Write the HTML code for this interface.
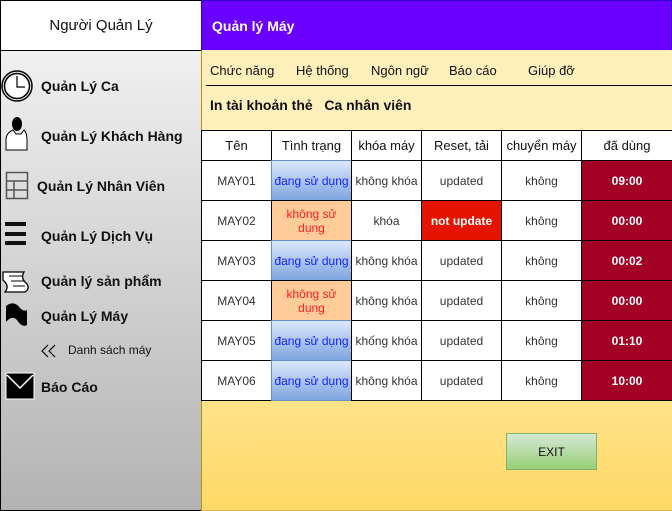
<!DOCTYPE html>
<html><head><meta charset="utf-8"><style>
*{margin:0;padding:0;box-sizing:border-box}
body{width:672px;height:511px;position:relative;overflow:hidden;font-family:"Liberation Sans",sans-serif;background:#fff}
.a{position:absolute}
.side{left:0;top:50px;width:202px;height:461px;border:1px solid #000;background:linear-gradient(#f0f0f0,#b3b3b3)}
.nav{position:absolute;font-weight:bold;font-size:14px;color:#111;white-space:nowrap}
.c{position:absolute;border:1px solid #000;display:flex;align-items:center;justify-content:center;text-align:center;font-size:12px;color:#333;line-height:14px;background:#fff}
.h{font-size:13px;color:#111}
.m{position:absolute;top:63px;font-size:13px;color:#111}
.blue{background:linear-gradient(#dae8fc,#7ea6e0);color:#1a1aff;border-color:#6c8ebf}
.or{background:#ffcc99;color:#ff2020}
.dr{background:#a20025;color:#fff;font-weight:bold}
</style></head><body>
<div class="a" style="left:0;top:0;width:202px;height:51px;border:1px solid #000;background:#fff;display:flex;align-items:center;justify-content:center;font-size:15px;color:#111">Người Quản Lý</div>
<div class="a side"></div>
<svg class="a" style="left:0;top:60px" width="40" height="350">
<circle cx="17" cy="26" r="15" fill="none" stroke="#000" stroke-width="1.5"/><circle cx="17" cy="26" r="12.5" fill="#fff" stroke="#000" stroke-width="1.5"/><path d="M17 16V27H25" fill="none" stroke="#000" stroke-width="1.2"/>
<path d="M6 90V80Q6 73 13 70L16 74 21 74 24 70Q27 73 27 80V90Z" fill="#fff" stroke="#000"/><ellipse cx="17" cy="64" rx="5" ry="7" fill="#000"/>
<rect x="6.5" y="112.5" width="21" height="26" fill="none" stroke="#555" stroke-width="1.5"/><path d="M6.5 121H27.5M6.5 130H27.5M14 121V138.5" stroke="#555" stroke-width="1.5"/>
<rect x="5" y="162" width="21" height="4" fill="#111"/><rect x="5" y="172" width="21" height="4" fill="#111"/><rect x="5" y="181" width="21" height="4" fill="#111"/>
<path d="M3 212H24Q20 218 27 224Q30 229 25 232H5Q10 226 3 220Z" fill="#fff" stroke="#000" stroke-width="1.3"/><path d="M9 216H22M11 221H24M13 226H25" stroke="#000"/>
<path d="M6 246Q14 240 20 248Q24 252 27 250V265Q22 268 17 260Q12 255 6 262Z" fill="#000"/>
<rect x="6" y="313" width="28" height="26" fill="#000" stroke="#fff"/><path d="M7 315L20 328 33 315" fill="none" stroke="#fff" stroke-width="1.5"/>
</svg>
<svg class="a" style="left:40px;top:343px" width="18" height="16"><path d="M8 2L2 8 8 14M15 2L9 8 15 14" fill="none" stroke="#000" stroke-width="1.2"/></svg>
<div class="nav" style="left:41px;top:78px">Quản Lý Ca</div>
<div class="nav" style="left:41px;top:128px">Quản Lý Khách Hàng</div>
<div class="nav" style="left:37px;top:178px">Quản Lý Nhân Viên</div>
<div class="nav" style="left:41px;top:228px">Quản Lý Dịch Vụ</div>
<div class="nav" style="left:41px;top:273px">Quản lý sản phẩm</div>
<div class="nav" style="left:41px;top:308px">Quản Lý Máy</div>
<div class="nav" style="left:68px;top:343px;font-weight:normal;font-size:12px">Danh sách máy</div>
<div class="nav" style="left:41px;top:379px">Báo Cáo</div>
<div class="a" style="left:201px;top:0;width:471px;height:51px;background:#6a00ff;border:1px solid #3700cc;color:#fff;font-weight:bold;font-size:14px;padding:17px 0 0 10px">Quản lý Máy</div>
<div class="a" style="left:201px;top:50px;width:471px;height:81px;background:#ffefbb;border-left:1px solid #b09500"></div>
<div class="a" style="left:206px;top:85px;width:466px;height:1px;background:#000"></div>
<div class="m" style="left:210px">Chức năng</div>
<div class="m" style="left:296px">Hệ thống</div>
<div class="m" style="left:371px">Ngôn ngữ</div>
<div class="m" style="left:449px">Báo cáo</div>
<div class="m" style="left:528px">Giúp đỡ</div>
<div class="a" style="left:210px;top:97px;font-size:14px;font-weight:bold;color:#111">In tài khoản thẻ &nbsp;&nbsp;Ca nhân viên</div>
<div class="a" style="left:201px;top:400px;width:471px;height:111px;background:linear-gradient(#ffe38a,#ffd966);border-left:1px solid #b09500;border-bottom:1px solid #d6b656"></div>
<div class="a" style="left:506px;top:433px;width:91px;height:37px;background:linear-gradient(#d5e8d4,#97d077);border:1px solid #82b366;display:flex;align-items:center;justify-content:center;font-size:12px;color:#111">EXIT</div>
<div id="t"></div>
<script>
var xs=[201,271,351,421,501,581,672],ys=[130,160,200,240,280,320,360,400];
var H=["Tên","Tình trạng","khóa máy","Reset, tải","chuyển máy","đã dùng"];
var R=[["MAY01","b","không khóa","updated","09:00"],["MAY02","o","khóa","nu","00:00"],["MAY03","b","không khóa","updated","00:02"],["MAY04","o","không khóa","updated","00:00"],["MAY05","b","khống khóa","updated","01:10"],["MAY06","b","không khóa","updated","10:00"]];
var h="";
function cell(c,r,txt,cls,st){h+='<div class="c '+(cls||'')+'" style="left:'+xs[c]+'px;top:'+ys[r]+'px;width:'+(xs[c+1]-xs[c]+1)+'px;height:'+(ys[r+1]-ys[r]+1)+'px;'+(st||'')+'">'+txt+'</div>';}
H.forEach(function(t,i){cell(i,0,t,'h');});
R.forEach(function(r,j){var y=j+1;
cell(0,y,r[0]);
if(r[1]=="b")cell(1,y,"đang sử dụng","blue");else cell(1,y,"không sử<br>dụng","or");
cell(2,y,r[2]);
if(r[3]=="nu")cell(3,y,"not update","",'background:#e51400;color:#fff;font-weight:bold');else cell(3,y,r[3]);
cell(4,y,"không");cell(5,y,r[4],"dr");});
document.getElementById("t").innerHTML=h;
</script>
</body></html>
